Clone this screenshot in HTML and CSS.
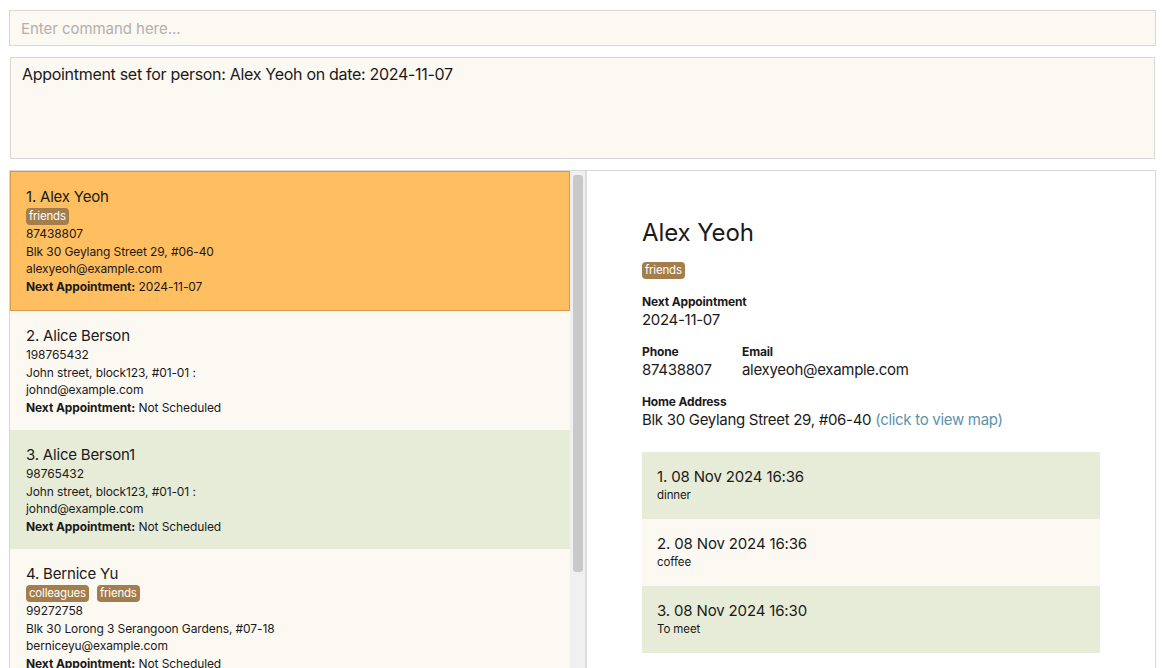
FILE: index.html
```html
<!DOCTYPE html>
<html>
<head>
<meta charset="utf-8">
<link rel="stylesheet" href="styles.css">
</head>
<body>
<div class="app">
  <div class="command"><span class="placeholder">Enter command here...</span></div>
  <div class="result">Appointment set for person: Alex Yeoh on date: 2024-11-07</div>
  <div class="main">
    <div class="list-pane">
      <div class="list">
        <div class="card selected">
          <div class="name">1. Alex Yeoh</div>
          <div class="tags"><span class="tag">friends</span></div>
          <div class="line">87438807</div>
          <div class="line">Blk 30 Geylang Street 29, #06-40</div>
          <div class="line">alexyeoh@example.com</div>
          <div class="line"><b>Next Appointment:</b> 2024-11-07</div>
        </div>
        <div class="card cream">
          <div class="name">2. Alice Berson</div>
          <div class="line">198765432</div>
          <div class="line">John street, block123, #01-01 :</div>
          <div class="line">johnd@example.com</div>
          <div class="line"><b>Next Appointment:</b> Not Scheduled</div>
        </div>
        <div class="card green">
          <div class="name">3. Alice Berson1</div>
          <div class="line">98765432</div>
          <div class="line">John street, block123, #01-01 :</div>
          <div class="line">johnd@example.com</div>
          <div class="line"><b>Next Appointment:</b> Not Scheduled</div>
        </div>
        <div class="card cream">
          <div class="name">4. Bernice Yu</div>
          <div class="tags"><span class="tag">colleagues</span><span class="tag">friends</span></div>
          <div class="line">99272758</div>
          <div class="line">Blk 30 Lorong 3 Serangoon Gardens, #07-18</div>
          <div class="line">berniceyu@example.com</div>
          <div class="line"><b>Next Appointment:</b> Not Scheduled</div>
        </div>
      </div>
      <div class="scrollbar"><div class="thumb"></div></div>
    </div>
    <div class="divider"></div>
    <div class="detail">
      <div class="d-name">Alex Yeoh</div>
      <div class="tags d-tags"><span class="tag">friends</span></div>
      <div class="field first">
        <div class="label">Next Appointment</div>
        <div class="value">2024-11-07</div>
      </div>
      <div class="row">
        <div class="field phone">
          <div class="label">Phone</div>
          <div class="value">87438807</div>
        </div>
        <div class="field">
          <div class="label">Email</div>
          <div class="value">alexyeoh@example.com</div>
        </div>
      </div>
      <div class="field">
        <div class="label">Home Address</div>
        <div class="value">Blk 30 Geylang Street 29, #06-40 <span class="link">(click to view map)</span></div>
      </div>
      <div class="appts">
        <div class="appt green">
          <div class="a-title">1. 08 Nov 2024 16:36</div>
          <div class="a-sub">dinner</div>
        </div>
        <div class="appt cream">
          <div class="a-title">2. 08 Nov 2024 16:36</div>
          <div class="a-sub">coffee</div>
        </div>
        <div class="appt green">
          <div class="a-title">3. 08 Nov 2024 16:30</div>
          <div class="a-sub">To meet</div>
        </div>
      </div>
    </div>
  </div>
</div>
</body>
</html>
```
FILE: styles.css
```css
html, body {
  margin: 0;
  padding: 0;
  background: #ffffff;
  height: 100%;
  overflow: hidden;
}
body {
  font-family: Inter, "Noto Sans", "Liberation Sans", sans-serif;
  color: #1a1a1a;
}
.app {
  display: flex;
  flex-direction: column;
  padding: 10px 10px 0 9px;
  height: 668px;
  box-sizing: border-box;
}
.command {
  height: 36px;
  box-sizing: border-box;
  border: 1px solid #d8d8d8;
  background: #fcf8f2;
  display: flex;
  align-items: center;
  padding-left: 11px;
}
.placeholder {
  color: #b3b0ac;
  font-size: 15px;
  letter-spacing: -0.05px;
}
.result {
  margin: 11px 1px 0 1px;
  height: 102px;
  box-sizing: border-box;
  border: 1px solid #d8d8d8;
  background: #fcf8f2;
  font-size: 16px;
  letter-spacing: -0.3px;
  padding: 5px 11px;
  line-height: 22px;
}
.main {
  margin-top: 11px;
  flex: 1;
  border: 1px solid #d8d8d8;
  border-bottom: none;
  display: flex;
  min-height: 0;
  overflow: hidden;
}
.list-pane {
  display: flex;
  width: 575px;
  flex-shrink: 0;
}
.list {
  width: 560px;
  flex-shrink: 0;
}
.card {
  padding: 15px 15px 14px 16px;
  font-size: 12px;
  letter-spacing: -0.1px;
}
.card.selected {
  background: #ffbe5f;
  border: 1px solid #d99b4a;
  padding: 15px 14px 15px 15px;
}
.cream { background: #fcf8f2; }
.green { background: #e7ecd8; }
.name {
  font-size: 15px;
  letter-spacing: -0.2px;
  line-height: 20px;
}
.line {
  line-height: 17.5px;
}
.line b {
  font-weight: 700;
}
.tags {
  display: flex;
  gap: 8px;
  margin: 1px 0 0 0;
}
.tag {
  background: #a37d4c;
  color: #fff;
  font-size: 11.5px;
  letter-spacing: -0.2px;
  line-height: 17px;
  padding: 0 3px;
  border-radius: 4px;
}
.scrollbar {
  width: 15px;
  background: #f0f0f0;
  padding: 4px 2px 0 3px;
  box-sizing: border-box;
}
.thumb {
  height: 397px;
  background: #c9c9c9;
  border-radius: 3px;
}
.divider {
  width: 2px;
  background: #dcdcdc;
  flex-shrink: 0;
}
.detail {
  flex: 1;
  padding: 46px 0 0 55px;
  background: #ffffff;
}
.d-name {
  font-size: 24px;
  letter-spacing: -0.1px;
  line-height: 32px;
}
.d-tags {
  margin-top: 13px;
}
.field {
  margin-top: 13px;
}
.field.first {
  margin-top: 14px;
}
.row {
  display: flex;
}
.row .field {
  margin-top: 13px;
}
.phone {
  width: 100px;
}
.label {
  font-size: 12px;
  font-weight: 700;
  line-height: 17px;
  letter-spacing: -0.15px;
}
.value {
  font-size: 15px;
  letter-spacing: -0.3px;
  line-height: 20px;
}
.link {
  color: #5e92ab;
}
.appts {
  margin-top: 22px;
  width: 458px;
}
.appt {
  padding: 15px 15px 16px 15px;
}
.a-title {
  font-size: 15px;
  letter-spacing: -0.15px;
  line-height: 20px;
}
.a-sub {
  font-size: 11.5px;
  letter-spacing: -0.1px;
  line-height: 16px;
}
```
